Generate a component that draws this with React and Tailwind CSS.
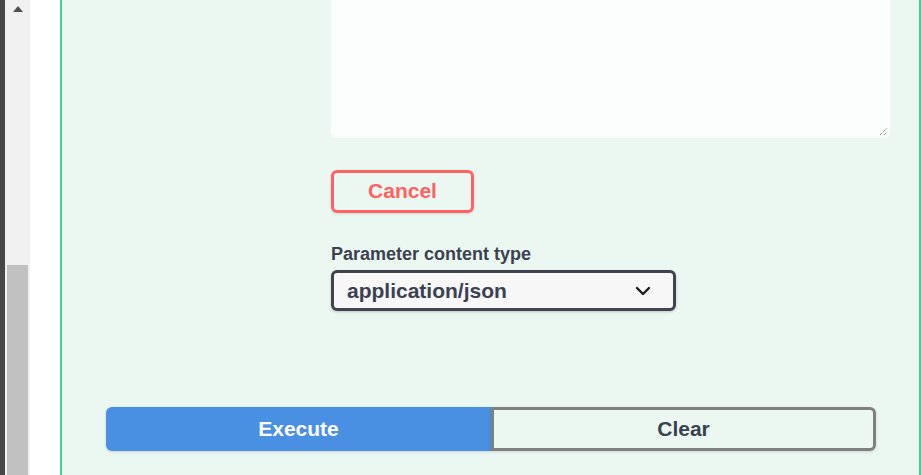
import React from 'react'

// ── Fake window scrollbar on the left edge ────────────────────────────────────
function ScrollTrack() {
  return (
    <div className="flex w-[30px] shrink-0">
      <div className="w-[5px] bg-[#474747]" />
      <div className="flex w-[25px] flex-col bg-[#f0f0f0]">
        <div className="flex h-[18px] items-center justify-center">
          <svg width="10" height="6" viewBox="0 0 10 6">
            <path d="M0 6 L5 0 L10 6 Z" fill="#505050" />
          </svg>
        </div>
        <div className="flex-1" />
        <div className="mx-[2px] h-[210px] bg-[#c1c1c1]" />
      </div>
    </div>
  )
}

function Chevron() {
  return (
    <svg width="16" height="10" viewBox="0 0 16 10" fill="none">
      <path d="M2 2 L8 8 L14 2" stroke="#1b1b1b" strokeWidth="2.4" strokeLinecap="round" strokeLinejoin="round" />
    </svg>
  )
}

export default function App() {
  return (
    <div
      className="flex h-[475px] w-[921px] overflow-hidden bg-white"
      style={{ fontFamily: '"Liberation Sans", Arial, sans-serif' }}
    >
      <ScrollTrack />
      <div className="w-[30px] shrink-0 bg-white" />

      {/* operation body */}
      <div className="flex flex-1 flex-col border-x-2 border-[#49cc90] bg-[#ebf8f2]">
        {/* request body textarea (scrolled, top cut off) */}
        <div className="relative ml-[269px] mr-[29px] h-[138px] rounded-b-[6px] bg-[#fbfefd]">
          <svg className="absolute bottom-[2px] right-[2px]" width="9" height="9" viewBox="0 0 9 9">
            <path d="M1 8 L8 1 M5 8 L8 5" stroke="#555" strokeWidth="1" strokeDasharray="1 1" />
          </svg>
        </div>

        <div className="ml-[269px] mt-[32px]">
          <button className="flex h-[43px] w-[143px] items-center justify-center rounded-[6px] border-[3px] border-[#ff6060] pb-[1px] text-[21px] font-bold text-[#ff6060] shadow-[0_1px_3px_rgba(0,0,0,0.12)]">
            Cancel
          </button>
        </div>

        <div className="ml-[269px] mt-[30px] text-[18px] font-bold leading-[22px] text-[#3b4151]">
          Parameter content type
        </div>
        <div className="ml-[269px] mt-[5px]">
          <div className="flex h-[41px] w-[345px] items-center justify-between rounded-[6px] border-[3px] border-[#41444e] bg-[#f7f7f7] pl-[13px] pr-[22px] text-[21px] font-bold text-[#3b4151] shadow-[0_1px_3px_rgba(0,0,0,0.2)]">
            <span>application/json</span>
            <Chevron />
          </div>
        </div>

        <div className="ml-[44px] mt-[96px] flex h-[44px]">
          <button className="flex w-[385px] items-center justify-center rounded-l-[6px] bg-[#4990e2] text-[21px] font-bold text-white shadow-[0_1px_3px_rgba(0,0,0,0.15)]">
            Execute
          </button>
          <button className="flex w-[385px] items-center justify-center rounded-r-[6px] border-[3px] border-[#808080] text-[21px] font-bold text-[#3b4151] shadow-[0_1px_3px_rgba(0,0,0,0.15)]">
            Clear
          </button>
        </div>
      </div>
    </div>
  )
}
